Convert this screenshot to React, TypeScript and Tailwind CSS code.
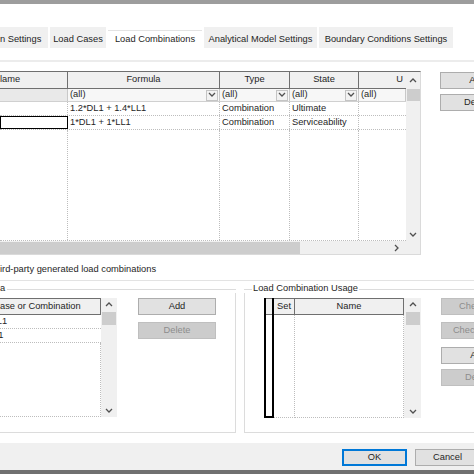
import React from "react";

const HEADER = "bg-[#f0f0f0] border-[#6f6f6f]";

function Chevron({ dir = "down" }: { dir?: "down" | "up" | "right" }) {
  const d =
    dir === "down" ? "M1 2 L4 5 L7 2" : dir === "up" ? "M1 5 L4 2 L7 5" : "M2 1 L5 4 L2 7";
  return (
    <svg width="8" height="8" viewBox="0 0 8 8" className="shrink-0">
      <path d={d} fill="none" stroke="#505050" strokeWidth="1.3" />
    </svg>
  );
}

function FilterCell({ width, dropdown = true, gray = false }: { width: number; dropdown?: boolean; gray?: boolean }) {
  return (
    <div
      className={`flex items-center h-full border-r border-[#c8c8c8] ${gray ? "bg-[#e9e9e9]" : "bg-[#f7f7f7]"}`}
      style={{ width }}
    >
      {!gray && <span className="pl-[2px] flex-1">(all)</span>}
      {dropdown && !gray && (
        <div className="w-[12px] h-[11px] mr-[1px] border border-[#c4c4c4] bg-[#f2f2f2] flex items-center justify-center">
          <Chevron />
        </div>
      )}
    </div>
  );
}

function Btn({ label, disabled = false, w, className = "" }: { label: string; disabled?: boolean; w: number; className?: string }) {
  return (
    <div
      className={`h-[17px] flex items-center justify-center border shrink-0 whitespace-nowrap ${
        disabled ? "bg-[#cccccc] border-[#bfbfbf] text-[#8d8d8d]" : "bg-[#e1e1e1] border-[#adadad] text-[#1e1e1e]"
      } ${className}`}
      style={{ width: w }}
    >
      {label}
    </div>
  );
}

const cols = [
  { key: "name", w: 68 },
  { key: "formula", w: 152 },
  { key: "type", w: 70 },
  { key: "state", w: 69 },
  { key: "u", w: 47 },
];

const rows = [
  { formula: "1.2*DL1 + 1.4*LL1", type: "Combination", state: "Ultimate" },
  { formula: "1*DL1 + 1*LL1", type: "Combination", state: "Serviceability" },
];

export default function App() {
  return (
    <div className="w-[474px] h-[474px] overflow-hidden bg-white text-[9.3px] leading-none text-[#1e1e1e] font-['Liberation_Sans',Arial,sans-serif] flex flex-col">
      <div className="h-[4px] bg-[#9d9d9d] shrink-0" />
      <div className="h-[23px] shrink-0" />

      {/* tabs */}
      <div className="h-[21px] shrink-0 flex items-end gap-[2px] whitespace-nowrap">
        <div className="w-[48px] h-[21px] bg-[#f0f0f0] flex items-center pt-[4px]">n Settings</div>
        <div className="w-[56px] h-[21px] bg-[#f0f0f0] flex items-center justify-center pt-[4px]">Load Cases</div>
        <div className="w-[94px] h-[18px] bg-white border-t border-[#e3e3e3] flex items-center justify-center">
          Load Combinations
        </div>
        <div className="w-[113px] h-[21px] bg-[#f0f0f0] flex items-center justify-center pt-[4px]">Analytical Model Settings</div>
        <div className="w-[134px] h-[21px] bg-[#f0f0f0] flex items-center justify-center pt-[4px]">Boundary Conditions Settings</div>
      </div>
      <div className="h-[12px] shrink-0" />
      <div className="h-[2px] bg-[#ececec] shrink-0" />
      <div className="h-[9px] shrink-0" />

      {/* main grid + buttons */}
      <div className="flex shrink-0">
        <div className="w-[421px] shrink-0 h-[184px] border-t border-[#6f6f6f] border-r border-b border-r-[#dadada] border-b-[#dadada] flex flex-col">
          <div className="flex flex-1 min-h-0">
            <div className="w-[406px] flex flex-col">
              {/* header */}
              <div className="h-[17px] flex border-b border-[#6f6f6f] bg-[#f0f0f0]">
                <div className={`w-[68px] border-r ${HEADER} flex items-center`}>lame</div>
                <div className={`w-[152px] border-r ${HEADER} flex items-center justify-center`}>Formula</div>
                <div className={`w-[70px] border-r ${HEADER} flex items-center justify-center`}>Type</div>
                <div className={`w-[69px] border-r ${HEADER} flex items-center justify-center`}>State</div>
                <div className="w-[47px] flex items-center justify-end pr-[3px]">U</div>
              </div>
              {/* filter */}
              <div className="h-[13px] flex border-b border-[#d0d0d0]">
                <FilterCell width={68} gray />
                <FilterCell width={152} />
                <FilterCell width={70} />
                <FilterCell width={69} />
                <FilterCell width={47} dropdown={false} />
              </div>
              {rows.map((r, i) => (
                <div key={i} className="h-[14px] flex border-b border-dotted border-[#bdbdbd]">
                  <div className={`w-[68px] ${i === 1 ? "border border-black" : "border-r border-dotted border-[#bdbdbd]"}`} />
                  <div className="w-[152px] border-r border-dotted border-[#bdbdbd] flex items-center pl-[2px]">{r.formula}</div>
                  <div className="w-[70px] border-r border-dotted border-[#bdbdbd] flex items-center pl-[2px]">{r.type}</div>
                  <div className="w-[69px] border-r border-dotted border-[#bdbdbd] flex items-center pl-[2px]">{r.state}</div>
                  <div className="w-[47px]" />
                </div>
              ))}
              <div className="flex-1 flex border-b border-dotted border-[#bdbdbd]">
                {cols.map((c, i) => (
                  <div
                    key={c.key}
                    className={i < cols.length - 1 ? "border-r border-dotted border-[#bdbdbd]" : ""}
                    style={{ width: c.w }}
                  />
                ))}
              </div>
            </div>
            {/* vertical scrollbar */}
            <div className="w-[14px] bg-[#f0f0f0] flex flex-col items-center">
              <div className="h-[17px] flex items-center">
                <Chevron dir="up" />
              </div>
              <div className="w-[13px] h-[12px] bg-[#cdcdcd]" />
              <div className="flex-1" />
              <div className="h-[12px] flex items-center">
                <Chevron />
              </div>
            </div>
          </div>
          {/* horizontal scrollbar */}
          <div className="h-[13px] flex bg-[#f0f0f0] shrink-0">
            <div className="w-[300px] h-[12px] mt-[1px] bg-[#cdcdcd]" />
            <div className="flex-1 flex items-center justify-end pr-[4px]">
              <Chevron dir="right" />
            </div>
            <div className="w-[15px]" />
          </div>
        </div>
        <div className="ml-[19px] pt-[1px] flex flex-col gap-[5px] shrink-0">
          <Btn label="Add" w={75} />
          <Btn label="Delete" w={75} />
        </div>
      </div>

      <div className="h-[19px] shrink-0 flex items-end">ird-party generated load combinations</div>
      <div className="h-[6px] shrink-0" />
      <div className="h-[1px] bg-[#e3e3e3] shrink-0" />
      <div className="h-[6px] shrink-0" />

      {/* group boxes */}
      <div className="h-[146px] shrink-0 flex">
        {/* left group */}
        <div className="w-[236px] shrink-0 flex flex-col">
          <div className="h-[6px] flex items-start">
            <span className="-mt-[3px] pr-[2px]">a</span>
            <div className="flex-1 h-[1px] mt-[2px] bg-[#dcdcdc]" />
          </div>
          <div className="flex-1 border-r border-b border-[#dcdcdc] flex pt-[5px]">
            <div className="w-[117px] h-[119px] flex flex-col">
              <div className="flex flex-1">
                <div className="w-[101px] flex flex-col">
                  <div className="h-[17px] bg-[#f0f0f0] border-t border-r border-b border-[#6f6f6f] flex items-center whitespace-nowrap">
                    ase or Combination
                  </div>
                  <div className="h-[14px] border-b border-dotted border-[#bdbdbd] flex items-center overflow-hidden">
                    <span className="-ml-[10px]">DL1</span>
                  </div>
                  <div className="h-[14px] border-b border-dotted border-[#bdbdbd] flex items-center overflow-hidden">
                    <span className="-ml-[12px]">LL1</span>
                  </div>
                  <div className="flex-1 border-b border-r border-dotted border-[#bdbdbd]" />
                </div>
                <div className="flex-1 bg-[#f0f0f0] flex flex-col items-center">
                  <div className="h-[14px] flex items-center">
                    <Chevron dir="up" />
                  </div>
                  <div className="w-[14px] h-[13px] bg-[#cdcdcd]" />
                  <div className="flex-1" />
                  <div className="h-[12px] flex items-center">
                    <Chevron />
                  </div>
                </div>
              </div>
            </div>
            <div className="ml-[21px] flex flex-col gap-[7px]">
              <Btn label="Add" w={78} />
              <Btn label="Delete" w={78} disabled />
            </div>
          </div>
        </div>

        <div className="w-[8px] shrink-0" />

        {/* right group */}
        <div className="flex-1 min-w-0 flex flex-col">
          <div className="h-[6px] flex items-start">
            <div className="w-[8px] h-[1px] mt-[2px] bg-[#dcdcdc]" />
            <span className="-mt-[3px] px-[1px] whitespace-nowrap">Load Combination Usage</span>
            <div className="flex-1 h-[1px] mt-[2px] bg-[#dcdcdc]" />
          </div>
          <div className="flex-1 border-l border-b border-[#dcdcdc] flex pt-[5px]">
            <div className="ml-[19px] w-[157px] shrink-0 h-[120px] flex">
              <div className="w-[10px] flex flex-col border-2 border-t-0 border-black">
                <div className="h-[17px] bg-[#f0f0f0] border-t border-b border-[#6f6f6f]" />
                <div className="flex-1" />
              </div>
              <div className="w-[21px] flex flex-col">
                <div className="h-[17px] bg-[#f0f0f0] border-t border-r border-b border-[#6f6f6f] flex items-center justify-center">
                  Set
                </div>
                <div className="flex-1 border-r border-b border-dotted border-[#bdbdbd]" />
              </div>
              <div className="w-[109px] flex flex-col">
                <div className="h-[17px] bg-[#f0f0f0] border-t border-r border-b border-[#6f6f6f] flex items-center justify-center">
                  Name
                </div>
                <div className="flex-1 border-b border-r border-dotted border-[#bdbdbd]" />
              </div>
              <div className="flex-1 bg-[#f0f0f0] flex flex-col items-center">
                <div className="h-[14px] flex items-center">
                  <Chevron dir="up" />
                </div>
                <div className="w-[14px] h-[13px] bg-[#cdcdcd]" />
                <div className="flex-1" />
                <div className="h-[12px] flex items-center">
                  <Chevron />
                </div>
              </div>
            </div>
            <div className="ml-[20px] flex flex-col shrink-0">
              <Btn label="Check All" w={75} disabled />
              <Btn label="Check None" w={75} disabled className="mt-[7px]" />
              <Btn label="Add" w={75} className="mt-[8px]" />
              <Btn label="Delete" w={75} disabled className="mt-[5px]" />
            </div>
          </div>
        </div>
      </div>

      <div className="h-[10px] shrink-0" />

      {/* bottom bar */}
      <div className="flex-1 bg-[#f0f0f0] flex items-start pt-[6px]">
        <div className="ml-[342px] flex gap-[8px] shrink-0">
          <div className="w-[65px] h-[17px] shrink-0 bg-[#e1e1e1] border-2 border-[#0078d7] flex items-center justify-center">OK</div>
          <div className="w-[65px] h-[17px] shrink-0 bg-[#e1e1e1] border border-[#adadad] flex items-center justify-center">Cancel</div>
        </div>
      </div>
      <div className="h-[4px] bg-[#707070] shrink-0" />
    </div>
  );
}
